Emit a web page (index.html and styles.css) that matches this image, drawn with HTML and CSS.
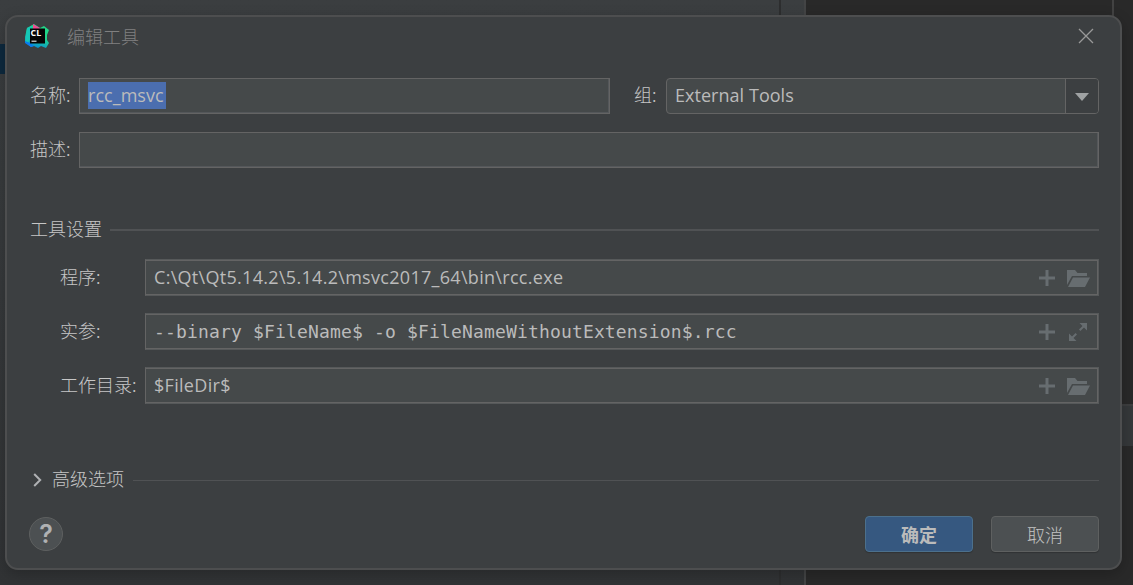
FILE: index.html
```html
<!DOCTYPE html>
<html lang="zh-CN">
<head>
<meta charset="utf-8">
<title>编辑工具</title>
<link rel="stylesheet" href="styles.css">
</head>
<body>
<div class="backdrop">
  <div class="project"><div class="selected"></div></div>
  <div class="gutter"></div>
  <div class="editor"><div class="ruler"></div><div class="side"></div></div>
</div>
<main class="dialog">
  <header class="titlebar">
    <svg class="logo" viewBox="0 0 24 24">
      <defs>
        <linearGradient id="lg" x1="0.7" y1="0" x2="0.3" y2="1"><stop offset=".45" stop-color="#21d789"/><stop offset=".95" stop-color="#078fd6"/></linearGradient>
      </defs>
      <path fill="url(#lg)" d="M2 4L9 0l6 4 4-2 5 4-2 5v5l2 3-3 5-5-2-3 2-4-2-3 1-6-5L0 13z"/>
      <path fill="#15c6b6" d="M2 4l5-2-1 12-3 5-3-1z"/>
      <path fill="#ee4b91" d="M8 4V0l7 4-1 1H8z"/>
      <path fill="#087cf0" d="M0 17l5 2 4 3-3 1-6-4z"/>
      <rect x="5" y="4.5" width="15" height="15" fill="#050505"/>
      <path d="M6.5 17.2h5" stroke="#ddd" stroke-width="1.2"/>
      <text x="5.6" y="12">CL</text>
    </svg>
    <h1>编辑工具</h1>
    <svg class="close" viewBox="0 0 16 16"><path d="M1 1l14 14M15 1L1 15"/></svg>
  </header>
  <section class="general">
    <div class="row">
      <label>名称:</label>
      <div class="field name"><span class="mark"><span class="fit">rcc_msvc</span></span></div>
      <label class="group-label">组:</label>
      <div class="combo"><span class="combo-value fit">External Tools</span><span class="arrow"><svg viewBox="0 0 14 8"><path d="M0 0h14L7 8z"/></svg></span></div>
    </div>
    <div class="row">
      <label>描述:</label>
      <div class="field"></div>
    </div>
  </section>
  <section class="settings">
    <div class="divider"><h2>工具设置</h2><i></i></div>
    <div class="grid">
      <label>程序:</label>
      <div class="field"><span class="fit path">C:\Qt\Qt5.14.2\5.14.2\msvc2017_64\bin\rcc.exe</span>
        <svg class="plus" viewBox="0 0 16 16"><path d="M8 0v16M0 8h16"/></svg>
        <svg class="folder" viewBox="0 0 23 17"><path d="M0 0h8l2.5 3H20v3H5L0 15zM6 7.5h17L18 17H1z"/></svg>
      </div>
      <label>实参:</label>
      <div class="field"><span class="mono">--binary $FileName$ -o $FileNameWithoutExtension$.rcc</span>
        <svg class="plus" viewBox="0 0 16 16"><path d="M8 0v16M0 8h16"/></svg>
        <svg class="expand" viewBox="0 0 18 18"><path class="tip" d="M10.5 0H18v7.5zM0 10.5V18h7.5z"/><path class="shaft" d="M15 3l-4.3 4.3M3 15l4.3-4.3"/></svg>
      </div>
      <label>工作目录:</label>
      <div class="field"><span class="fit path">$FileDir$</span>
        <svg class="plus" viewBox="0 0 16 16"><path d="M8 0v16M0 8h16"/></svg>
        <svg class="folder" viewBox="0 0 23 17"><path d="M0 0h8l2.5 3H20v3H5L0 15zM6 7.5h17L18 17H1z"/></svg>
      </div>
    </div>
  </section>
  <div class="divider advanced"><svg viewBox="0 0 9 14"><path d="M1.2 1l6 6-6 6"/></svg><h2>高级选项</h2><i></i></div>
  <footer>
    <button class="help">?</button>
    <button class="btn primary">确定</button>
    <button class="btn">取消</button>
  </footer>
</main>
</body>
</html>
```

FILE: styles.css
```css
* { box-sizing: border-box; }
body {
  margin: 0;
  width: 1133px;
  height: 585px;
  overflow: hidden;
  background: #2a2a2a;
  color: #bbbbbb;
  font: 300 18px/24px "Open Sans", "Noto Sans CJK SC", sans-serif;
}
h1, h2 { margin: 0; font: inherit; }
label, h1, h2, .btn { font-family: "Noto Sans CJK SC", sans-serif; white-space: nowrap; }
label, h2 { color: #c6c6c6; padding-bottom: 4px; }
h1 { padding-bottom: 4px; }
svg { display: block; flex: none; }

.backdrop { display: flex; height: 585px; }
.project { width: 781px; padding-top: 44px; background: linear-gradient(#3b3e40, #36393b 50%, #313335); border-right: 2px solid #2d2e2f; }
.selected { width: 20px; height: 30px; background: #0d293e; }
.gutter { width: 25px; background: linear-gradient(#3b3e40, #36393b 50%, #313335); border-right: 2px solid #434445; }
.editor { flex: 1; display: flex; flex-direction: column; background: #292929; }
.ruler { height: 404px; margin-right: 19px; border-right: 2px solid #424242; }
.side { height: 42px; margin-left: 300px; background: #35383a; border-top: 2px solid #3d3e3f; }

.dialog {
  position: absolute;
  left: 5px;
  top: 15px;
  width: 1117px;
  height: 555px;
  padding: 0 21px 0 22px;
  border: 2px solid #4d4e4f;
  border-radius: 13px;
  background: #3c3f41;
  box-shadow: 0 4px 14px rgba(0, 0, 0, .22);
}
.titlebar { display: flex; align-items: center; height: 42px; }
.logo { width: 24px; height: 24px; margin-left: -4px; margin-top: -4px; }
.logo text { font: 700 8.8px "Open Sans", sans-serif; fill: #fff; }
.titlebar h1 { margin-left: 18px; color: #808080; }
.close { width: 16px; height: 16px; margin: -4px 5px 0 auto; fill: none; stroke: #999; stroke-width: 1.3; }

.general { display: grid; gap: 18px; margin-top: 19px; }
.row { display: flex; align-items: center; height: 36px; }
.row > label { width: 50px; padding-left: 1px; }
.row > .group-label { width: 32px; margin-left: 24px; padding-left: 0; }
.field {
  flex: 1;
  display: flex;
  align-items: center;
  min-width: 0;
  height: 36px;
  padding: 0 8px;
  background: #45494a;
  border: 1px solid #646464;
  box-shadow: inset 0 -1px #54575a, inset -1px 0 #54575a;
}
.field.name { flex: none; width: 531px; }
.mark { height: 27px; margin-top: -2px; background: #4b6eaf; width: 78px; line-height: 27px; }
.fit { font-weight: 400; white-space: nowrap; letter-spacing: .04px; }
.path { letter-spacing: .3px; }
.combo {
  display: flex;
  flex: 1;
  height: 36px;
  background: #45494a;
  border: 1.5px solid #646464;
  border-radius: 4px;
  overflow: hidden;
}
.combo-value { flex: 1; padding-left: 8px; line-height: 33px; }
.arrow { display: grid; place-items: center; width: 33px; background: #3c3f41; border-left: 1px solid #646464; }
.arrow svg { width: 14px; height: 8px; margin-top: 2px; fill: #9fa2a3; }

.settings { margin-top: 50px; }
.divider { display: flex; align-items: center; height: 24px; }
.divider h2 { padding-left: 1px; }
.divider i { flex: 1; height: 2px; margin-left: 8px; background: #505254; }
.grid { display: grid; grid-template-columns: 85px 1fr; row-gap: 17px; align-items: center; margin: 17px 0 0 31px; }
.grid label { padding-bottom: 3px; }
.grid .field {
  height: 37px;
  padding-bottom: 2px;
  border-color: #56595a;
  border-left-color: #646464;
  box-shadow: inset 0 1px #646464, inset 0 -1px #646464, inset -1px 0 #646464;
}
.mono { padding-top: 2px; font: 400 18px "DejaVu Sans Mono", monospace; white-space: pre; letter-spacing: .16px; }
.plus { width: 16px; height: 16px; margin: 2px 0 0 auto; fill: none; stroke: #676d70; stroke-width: 3; }
.folder { width: 23px; height: 17px; margin: 3px 0 0 12px; fill: #676d70; }
.expand { width: 18px; height: 18px; margin: 2px 3px 0 14px; }
.expand .tip { fill: #676d70; }
.expand .shaft { fill: none; stroke: #676d70; stroke-width: 2; }

.advanced { margin-top: 64px; }
.advanced svg { width: 9px; height: 14px; margin: -1px 9px 0 4px; fill: none; stroke: #afb1b3; stroke-width: 2; }
.advanced h2 { padding: 0 0 4px 1px; }
.advanced i { height: 1px; margin-left: 9px; }
footer { display: flex; align-items: center; gap: 18px; height: 36px; margin-top: 24px; }
.help {
  width: 34px;
  height: 34px;
  margin-right: auto;
  padding: 0;
  border: 1px solid #5e6060;
  border-radius: 50%;
  background: #4c5052;
  color: #afb1b3;
  font: 600 25px/32px Inter, sans-serif;
}
.btn {
  width: 108px;
  height: 36px;
  padding: 0;
  border: 1.5px solid #5e6060;
  border-radius: 4px;
  background: #4c5052;
  color: #c3c3c3;
  font-size: 18px;
  font-weight: 300;
  box-shadow: 0 1px 1px rgba(0, 0, 0, .2);
}
.primary { background: #365880; border-color: #4c708c; color: #bbb; font-weight: 700; }
```
